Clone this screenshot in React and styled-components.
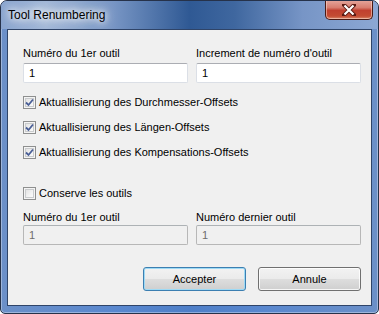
import React, { useState } from "react";
import styled, { createGlobalStyle } from "styled-components";

const GlobalStyle = createGlobalStyle`
  html, body {
    margin: 0;
    padding: 0;
    background: #ffffff;
  }
  * {
    box-sizing: border-box;
  }
`;

const UI_FONT = `"Liberation Sans", Arial, sans-serif`;

const Window = styled.div`
  width: 379px;
  height: 314px;
  border: 1px solid #26324a;
  border-radius: 7px 7px 5px 5px;
  background: linear-gradient(
    90deg,
    #6c90c8 0%,
    #5a88cf 30%,
    #4f7fc8 50%,
    #5a88cf 70%,
    #6c90c8 100%
  );
  display: flex;
  flex-direction: column;
  overflow: hidden;
  font-family: ${UI_FONT};
  font-size: 11px;
  color: #000;
  box-shadow: inset 0 0 0 1px rgba(255, 255, 255, 0.35);
`;

const TitleBar = styled.div`
  height: 28px;
  flex: none;
  display: flex;
  align-items: flex-start;
  padding-left: 7px;
  padding-right: 5px;
  background: linear-gradient(
    90deg,
    #8aa5cf 0%,
    #a2b8d8 12%,
    #7795c4 30%,
    #2f5994 50%,
    #3f679f 62%,
    #7795c6 80%,
    #8ca8d4 100%
  );
`;

const Title = styled.div`
  font-family: ${UI_FONT};
  font-size: 12px;
  line-height: 15px;
  margin-top: 7px;
  color: #000;
  text-shadow: 0 0 6px #fff, 0 0 10px #fff, 0 0 14px rgba(255, 255, 255, 0.9);
`;

const CloseButton = styled.div`
  margin-left: auto;
  margin-top: -1px;
  width: 48px;
  height: 20px;
  border: 1px solid #4a1a14;
  border-top: none;
  border-radius: 0 0 5px 5px;
  background: linear-gradient(
    180deg,
    #e5a89e 0%,
    #d77d6f 40%,
    #c0402f 55%,
    #c44c33 85%,
    #d88a6c 100%
  );
  box-shadow: inset 0 0 0 1px rgba(255, 220, 210, 0.55);
  display: flex;
  align-items: center;
  justify-content: center;
`;

const Client = styled.div`
  flex: 1;
  margin: 0 6px 7px 6px;
  border: 1px solid #2f4468;
  background: #f0f0f0;
  display: flex;
  flex-direction: column;
  padding: 16px 10px 0 15px;
`;

const FieldGrid = styled.div`
  display: grid;
  grid-template-columns: 1fr 1fr;
  column-gap: 8px;
  margin-top: ${(p) => p.$top || 0}px;
`;

const Field = styled.div`
  display: flex;
  flex-direction: column;
`;

const Label = styled.label`
  line-height: 15px;
  height: 15px;
  margin-bottom: ${(p) => (p.$tight ? 0 : 2)}px;
  white-space: nowrap;
`;

const TextInput = styled.input`
  height: 20px;
  width: 100%;
  margin: 0;
  padding: 0 0 0 5px;
  font-family: ${UI_FONT};
  font-size: 11px;
  color: ${(p) => (p.disabled ? "#6d6d6d" : "#000")};
  background: ${(p) => (p.disabled ? "#f0f0f0" : "#ffffff")};
  border: 1px solid ${(p) => (p.disabled ? "#b7b7b7" : "#dbdfe6")};
  border-top-color: ${(p) => (p.disabled ? "#adb2b5" : "#abadb3")};
  border-radius: 2px;
  outline: none;
`;

const CheckList = styled.div`
  display: flex;
  flex-direction: column;
  gap: 7px;
  margin-top: ${(p) => p.$top || 0}px;
`;

const CheckRow = styled.label`
  display: flex;
  align-items: center;
  height: 18px;
  gap: 3px;
  white-space: nowrap;
  cursor: default;
`;

const Box = styled.span`
  width: 13px;
  height: 13px;
  flex: none;
  border: 1px solid #8e8f8f;
  background: linear-gradient(135deg, #dcdcdc 0%, #f4f4f4 60%, #ffffff 100%);
  box-shadow: inset 0 0 0 1px #f4f4f4, inset 0 0 0 2px #c9cbcd;
  display: flex;
  align-items: center;
  justify-content: center;
`;

const ButtonRow = styled.div`
  display: flex;
  justify-content: flex-end;
  gap: 12px;
  margin-top: 22px;
`;

const Button = styled.button`
  width: 103px;
  height: 24px;
  margin: 0;
  padding: 0;
  font-family: ${UI_FONT};
  font-size: 11px;
  color: #000;
  border: 1px solid ${(p) => (p.$default ? "#3c7fb1" : "#707070")};
  border-radius: 3px;
  background: linear-gradient(
    180deg,
    #f2f2f2 0%,
    #ebebeb 48%,
    #dddddd 52%,
    #cfcfcf 100%
  );
  box-shadow: inset 0 0 0 1px
    ${(p) => (p.$default ? "#9edaf5" : "rgba(255,255,255,0.8)")};
`;

function CheckMark() {
  return (
    <svg width="9" height="9" viewBox="0 0 9 9">
      <path
        d="M1 4.5 L3.5 7 L8 1.5"
        fill="none"
        stroke="#4a5f97"
        strokeWidth="1.8"
      />
    </svg>
  );
}

function Check({ checked, onToggle, children }) {
  return (
    <CheckRow onClick={onToggle}>
      <Box>{checked && <CheckMark />}</Box>
      {children}
    </CheckRow>
  );
}

const App = () => {
  const [diam, setDiam] = useState(true);
  const [len, setLen] = useState(true);
  const [comp, setComp] = useState(true);
  const [keep, setKeep] = useState(false);

  return (
    <>
      <GlobalStyle />
      <Window>
        <TitleBar>
          <Title>Tool Renumbering</Title>
          <CloseButton>
            <svg width="14" height="12" viewBox="0 0 14 12">
              <path
                d="M2 1 L12 11 M12 1 L2 11"
                stroke="#5a1a12"
                strokeWidth="4"
                strokeLinecap="square"
              />
              <path
                d="M2.5 1.5 L11.5 10.5 M11.5 1.5 L2.5 10.5"
                stroke="#ffffff"
                strokeWidth="2.2"
              />
            </svg>
          </CloseButton>
        </TitleBar>
        <Client>
          <FieldGrid>
            <Field>
              <Label>Numéro du 1er outil</Label>
              <TextInput defaultValue="1" />
            </Field>
            <Field>
              <Label>Increment de numéro d'outil</Label>
              <TextInput defaultValue="1" />
            </Field>
          </FieldGrid>

          <CheckList $top={10}>
            <Check checked={diam} onToggle={() => setDiam(!diam)}>
              Aktuallisierung des Durchmesser-Offsets
            </Check>
            <Check checked={len} onToggle={() => setLen(!len)}>
              Aktuallisierung des Längen-Offsets
            </Check>
            <Check checked={comp} onToggle={() => setComp(!comp)}>
              Aktuallisierung des Kompensations-Offsets
            </Check>
          </CheckList>

          <CheckList $top={23}>
            <Check checked={keep} onToggle={() => setKeep(!keep)}>
              Conserve les outils
            </Check>
          </CheckList>

          <FieldGrid $top={8}>
            <Field>
              <Label $tight>Numéro du 1er outil</Label>
              <TextInput defaultValue="1" disabled />
            </Field>
            <Field>
              <Label $tight>Numéro dernier outil</Label>
              <TextInput defaultValue="1" disabled />
            </Field>
          </FieldGrid>

          <ButtonRow>
            <Button $default>Accepter</Button>
            <Button>Annule</Button>
          </ButtonRow>
        </Client>
      </Window>
    </>
  );
};

export default App;
